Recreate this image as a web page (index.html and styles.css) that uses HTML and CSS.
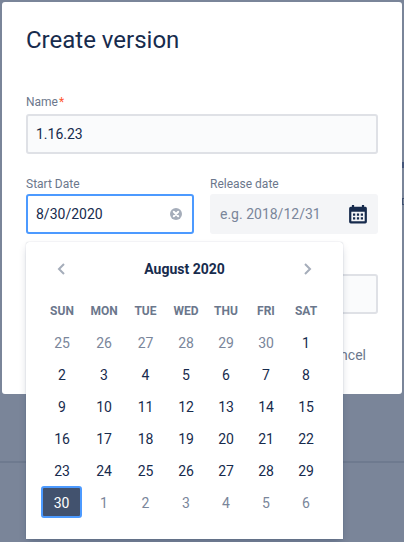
FILE: index.html
```html
<!DOCTYPE html>
<html lang="en">
<head>
<meta charset="utf-8">
<title>Create version</title>
<link rel="stylesheet" href="styles.css">
</head>
<body>
<span class="speck speck-bar"></span>
<span class="speck speck-box"></span>
<div class="modal">
  <h1 class="title">Create version</h1>
  <div class="field name-field">
    <label class="label">Name<span class="req">*</span></label>
    <div class="input">1.16.23</div>
  </div>
  <div class="date-row">
    <div class="field start">
      <label class="label">Start Date</label>
      <div class="input focused">8/30/2020
        <svg class="clear" width="16" height="16" viewBox="0 0 16 16"><circle cx="8" cy="8" r="6" fill="#a5adba"/><path d="M5.800 5.800l4.400 4.400M10.200 5.800l-4.400 4.400" stroke="#fff" stroke-width="2" stroke-linecap="round"/></svg>
      </div>
      <div class="picker">
        <div class="picker-head">
          <svg width="16" height="16" viewBox="0 0 16 16"><path d="M10 3L5 8l5 5" fill="none" stroke="#a5adba" stroke-width="2"/></svg>
          <span class="month">August 2020</span>
          <svg width="16" height="16" viewBox="0 0 16 16"><path d="M6 3l5 5-5 5" fill="none" stroke="#a5adba" stroke-width="2"/></svg>
        </div>
        <div class="grid">
          <span class="dow">SUN</span><span class="dow">MON</span><span class="dow">TUE</span><span class="dow">WED</span><span class="dow">THU</span><span class="dow">FRI</span><span class="dow">SAT</span>
          <span class="day out">25</span><span class="day out">26</span><span class="day out">27</span><span class="day out">28</span><span class="day out">29</span><span class="day out">30</span><span class="day">1</span>
          <span class="day">2</span><span class="day">3</span><span class="day">4</span><span class="day">5</span><span class="day">6</span><span class="day">7</span><span class="day">8</span>
          <span class="day">9</span><span class="day">10</span><span class="day">11</span><span class="day">12</span><span class="day">13</span><span class="day">14</span><span class="day">15</span>
          <span class="day">16</span><span class="day">17</span><span class="day">18</span><span class="day">19</span><span class="day">20</span><span class="day">21</span><span class="day">22</span>
          <span class="day">23</span><span class="day">24</span><span class="day">25</span><span class="day">26</span><span class="day">27</span><span class="day">28</span><span class="day">29</span>
          <span class="day selected">30</span><span class="day out">1</span><span class="day out">2</span><span class="day out">3</span><span class="day out">4</span><span class="day out">5</span><span class="day out">6</span>
        </div>
      </div>
    </div>
    <div class="field release">
      <label class="label">Release date</label>
      <div class="input muted">e.g. 2018/12/31
        <svg class="cal" width="20" height="20" viewBox="0 0 18 18"><path fill-rule="evenodd" fill="#172b4d" d="M3.500 1h2v1.500h7V1h2v1.500h.5A1.500 1.500 0 0 1 17 4v12a1.500 1.500 0 0 1-1.500 1.500h-13A1.500 1.500 0 0 1 1 16V4a1.500 1.500 0 0 1 1.500-1.500h1zM3 7v8.500h12V7zM4.500 8.500h2v2h-2zM8 8.500h2v2H8zM11.500 8.500h2v2h-2zM4.500 12h2v2h-2zM8 12h2v2H8zM11.500 12h2v2h-2z"/></svg>
      </div>
    </div>
  </div>
  <div class="field desc">
    <div class="input"></div>
  </div>
  <div class="actions"><a class="cancel">Cancel</a></div>
</div>
<div class="rule"></div>
</body>
</html>
```

FILE: styles.css
```css
* { box-sizing: border-box; }
html, body { margin: 0; height: 100%; overflow: hidden; }
body {
  background: #7a8599;
  font-family: Roboto, "Noto Sans", sans-serif;
  color: #172b4d;
  font-size: 14px;
  padding-top: 2px;
}
.speck { position: absolute; left: 402px; width: 2px; }
.speck-bar { top: 162px; height: 6px; background: #44567a; }
.speck-box { top: 198px; height: 7px; border: 1px solid #3f5070; border-right: 0; }
.modal {
  width: 400px;
  height: 392px;
  margin-left: 2px;
  background: #fff;
  border-radius: 3px;
  padding: 22px 24px 0 24px;
}
.title {
  margin: 0;
  font-size: 24px;
  font-weight: 400;
  line-height: 32px;
  color: #172b4d;
}
.name-field { margin-top: 38px; }
.label {
  display: block;
  font-size: 12px;
  line-height: 16px;
  color: #6b778c;
  margin-bottom: 4px;
}
.req { color: #ff5630; margin-left: 1px; }
.input {
  height: 40px;
  display: flex;
  align-items: center;
  justify-content: space-between;
  padding: 0 8px;
  border: 2px solid #dfe1e6;
  border-radius: 3px;
  background: #fafbfc;
  font-size: 14px;
}
.focused { border-color: #4c9aff; background: #fff; }
.muted { border-color: #f4f5f7; background: #f4f5f7; color: #7a869a; }
.date-row {
  display: flex;
  gap: 16px;
  margin-top: 22px;
}
.date-row .field { width: 168px; }
.date-row .label { margin-bottom: 2px; }
.start { position: relative; }
.desc { margin-top: 40px; }
.actions {
  display: flex;
  justify-content: flex-end;
  margin-top: 31px;
  padding-right: 12px;
}
.cancel { color: #6b778c; font-size: 14px; line-height: 20px; }
.picker {
  position: absolute;
  top: 66px;
  margin-top: 0;
  left: 0;
  width: 317px;
  height: 297px;
  background: #fff;
  border-radius: 3px 3px 0 0;
  box-shadow: 0 0 1px rgba(9,30,66,.31), 0 4px 8px -2px rgba(9,30,66,.25);
  padding: 0 0 0 15px;
}
.picker-head {
  display: flex;
  align-items: center;
  justify-content: space-between;
  height: 54px;
  padding: 0 28px 0 13px;
}
.month { font-weight: 700; font-size: 14px; }
.grid {
  display: grid;
  grid-template-columns: 42px 42px 41px 40px 40px 40px 40px;
  grid-auto-rows: 32px;
  margin-top: -2px;
}
.dow, .day {
  display: flex;
  align-items: center;
  justify-content: center;
  padding-top: 1px;
}
.dow { font-size: 12px; font-weight: 700; color: #6b778c; }
.day { font-size: 14px; color: #172b4d; }
.out { color: #7a869a; }
.selected {
  background: #42526e;
  color: #fff;
  border: 2px solid #4c9aff;
  border-radius: 3px;
  margin-right: 1px;
  padding-top: 1px;
}
.rule { height: 2px; margin-top: 67px; background: #6e7a8f; }
```
